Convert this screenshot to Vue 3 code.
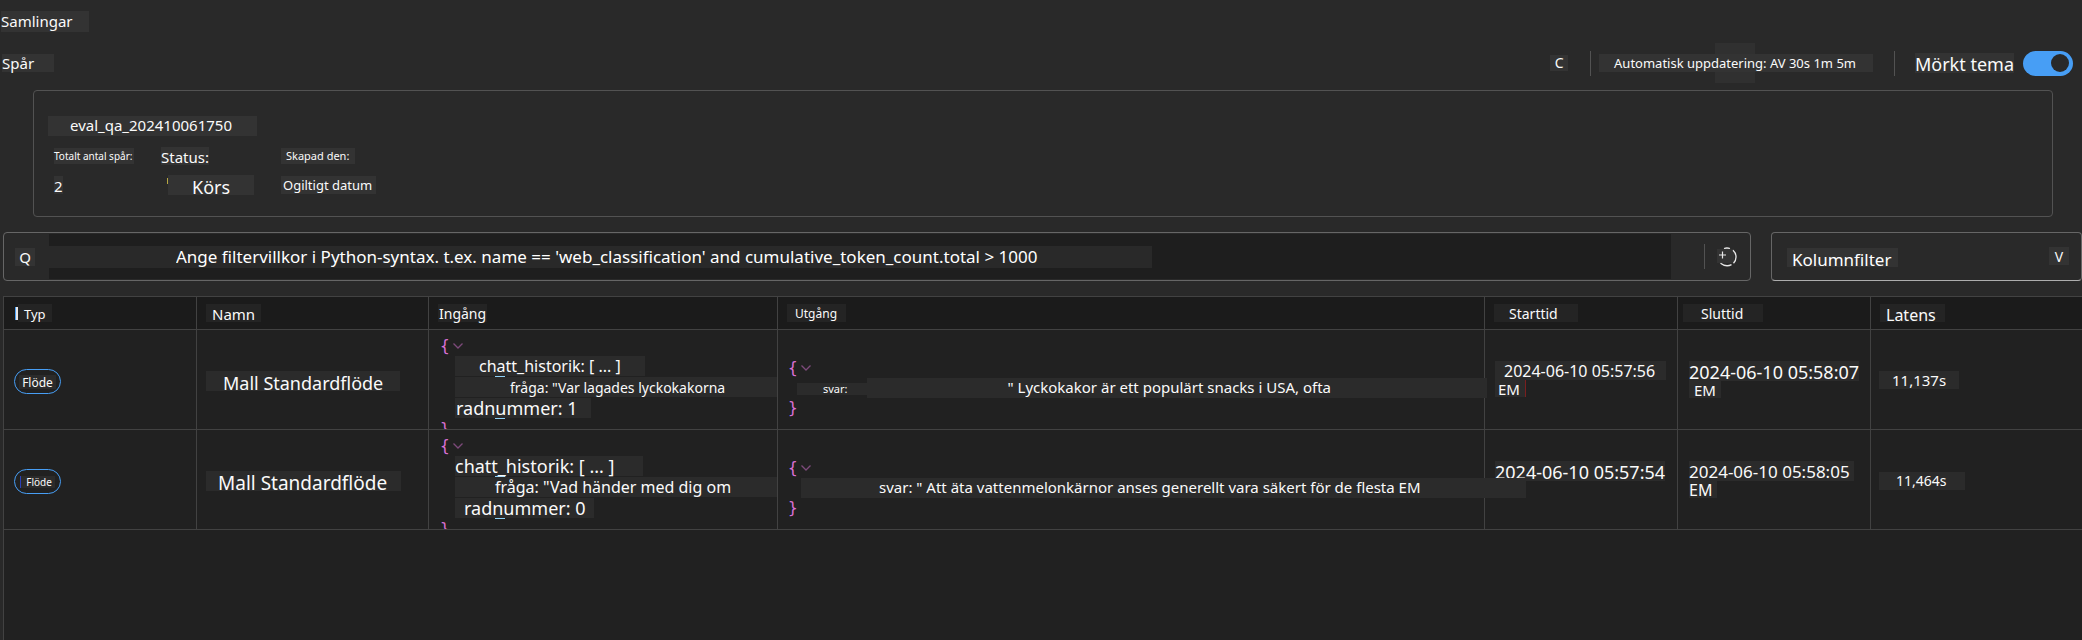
<script setup>
import { ref } from 'vue'

const darkTheme = ref(true)
const filter = ref("Ange filtervillkor i Python-syntax. t.ex. name == 'web_classification' and cumulative_token_count.total > 1000")
const column = ref('all')

const rows = [
  {
    id: 'a', kind: 'Flöde', name: 'Mall Standardflöde',
    history: 'chatt_historik: [ ... ]', question: 'fråga: "Var lagades lyckokakorna', line: 'radnummer: 1',
    answerKey: 'svar:', answer: '" Lyckokakor är ett populärt snacks i USA, ofta',
    start: '2024-06-10 05:57:56', startSuffix: 'EM',
    end: '2024-06-10 05:58:07', endSuffix: 'EM', latency: '11,137s'
  },
  {
    id: 'b', kind: 'Flöde', name: 'Mall Standardflöde',
    history: 'chatt_historik: [ ... ]', question: 'fråga: "Vad händer med dig om', line: 'radnummer: 0',
    answerKey: '', answer: 'svar: " Att äta vattenmelonkärnor anses generellt vara säkert för de flesta EM',
    start: '2024-06-10 05:57:54', startSuffix: '',
    end: '2024-06-10 05:58:05', endSuffix: 'EM', latency: '11,464s'
  }
]
</script>

<template>
  <div class="page">
    <nav class="crumbs"><a href="#" class="chip crumb">Samlingar</a></nav>

    <header class="bar">
      <h1 class="chip title">Spår</h1>
      <div class="tools">
        <button type="button" class="chip refresh" aria-label="Uppdatera">C</button>
        <span class="rule"></span>
        <div class="auto"><span class="chip auto-text">Automatisk uppdatering: AV 30s 1m 5m</span></div>
        <span class="rule"></span>
        <label class="chip theme-label" for="theme">Mörkt tema</label>
        <input id="theme" v-model="darkTheme" class="toggle" type="checkbox" />
      </div>
    </header>

    <section class="card">
      <h2 class="chip run-name">eval_qa_202410061750</h2>
      <dl class="facts">
        <div class="fact total">
          <dt><span class="chip small total-label">Totalt antal spår:</span></dt>
          <dd><span class="chip count">2</span></dd>
        </div>
        <div class="fact status">
          <dt><span class="chip medium">Status:</span></dt>
          <dd class="running"><span class="tick"></span><span class="chip state">Körs</span></dd>
        </div>
        <div class="fact">
          <dt><span class="chip small created">Skapad den:</span></dt>
          <dd><span class="chip date">Ogiltigt datum</span></dd>
        </div>
      </dl>
    </section>

    <div class="filters">
      <div class="search">
        <label class="chip search-icon" for="filter">Q</label>
        <div class="field"><input id="filter" v-model="filter" class="query" type="text" spellcheck="false" /></div>
        <span class="rule"></span>
        <button type="button" class="add" aria-label="Lägg till">
          <svg width="22" height="22" viewBox="0 0 22 22" fill="none">
            <path d="M1 3h17v14H1z" fill="#333" />
            <path d="M8 2.5Q11 1.5 14 2.5M17 4.3A9 9 0 0 1 17.5 17.3M15.5 18.6Q10 21.5 4.5 17.2" stroke="#e8e8e8" stroke-width="1.3" />
            <path d="M3 9h7M6.5 5.5v7" stroke="#e8e8e8" stroke-width="1.2" />
          </svg>
        </button>
      </div>
      <div class="columns">
        <select id="columns" v-model="column" aria-label="Kolumnfilter"><option value="all">Kolumnfilter</option></select>
        <span class="chip caret" aria-hidden="true">V</span>
      </div>
    </div>

    <main class="traces">
      <table>
        <colgroup>
          <col class="c-type" /><col class="c-name" /><col class="c-in" /><col />
          <col class="c-time" /><col class="c-time" /><col class="c-lat" />
        </colgroup>
        <thead>
          <tr>
            <th scope="col"><div class="head"><span class="sort"></span><span class="chip h-type">Typ</span></div></th>
            <th scope="col"><div class="head"><span class="chip h-name">Namn</span></div></th>
            <th scope="col"><div class="head"><span class="chip h-in">Ingång</span></div></th>
            <th scope="col"><div class="head"><span class="chip h-out">Utgång</span></div></th>
            <th scope="col"><div class="head"><span class="chip h-start">Starttid</span></div></th>
            <th scope="col"><div class="head tight"><span class="chip h-end">Sluttid</span></div></th>
            <th scope="col"><div class="head"><span class="chip h-lat">Latens</span></div></th>
          </tr>
        </thead>
        <tbody>
          <tr v-for="r in rows" :key="r.id" :class="'row-' + r.id">
            <td><span class="pill"><span class="chip kind">{{ r.kind }}</span></span></td>
            <td><div class="name-cell"><span class="chip name">{{ r.name }}</span></div></td>
            <td>
              <div class="tree input-tree">
                <div class="brace">{ <svg width="10" height="6" viewBox="0 0 10 6" fill="none"><path d="M.5.5 5 5 9.5.5" stroke="#7d4a7b" stroke-width="1.3" /></svg></div>
                <div class="line marked"><span class="chip history">{{ r.history }}</span></div>
                <div class="line"><span class="chip question">{{ r.question }}</span></div>
                <div class="line marked"><span class="chip number">{{ r.line }}</span></div>
                <div class="brace">}</div>
              </div>
            </td>
            <td>
              <div class="tree output-tree">
                <div class="brace">{ <svg width="10" height="6" viewBox="0 0 10 6" fill="none"><path d="M.5.5 5 5 9.5.5" stroke="#7d4a7b" stroke-width="1.3" /></svg></div>
                <div class="line out-line"><span v-if="r.answerKey" class="chip key">{{ r.answerKey }}</span><span class="chip answer">{{ r.answer }}</span></div>
                <div class="brace">}</div>
              </div>
            </td>
            <td><div class="time start"><span class="chip stamp">{{ r.start }}</span><span v-if="r.startSuffix" class="chip suffix">{{ r.startSuffix }}</span></div></td>
            <td><div class="time end"><span class="chip stamp">{{ r.end }}</span><span class="chip suffix">{{ r.endSuffix }}</span></div></td>
            <td><span class="chip latency">{{ r.latency }}</span></td>
          </tr>
        </tbody>
      </table>
    </main>
  </div>
</template>

<style>
body { margin: 0; background: #292929; }
</style>

<style scoped>
* { box-sizing: border-box; }
.page {
  min-height: 100vh; display: flex; flex-direction: column; overflow: hidden;
  background: #292929; color: #fff; font-family: "Noto Sans", "Open Sans", sans-serif; font-size: 15px;
}
h1, h2, dl, dd { margin: 0; font-weight: 400; }
button, input, select { font: inherit; color: inherit; border: 0; margin: 0; padding: 0; }
.chip {
  display: inline-block; flex: none; height: 18px; line-height: 18px;
  background: #333; white-space: nowrap; color: #fafafa;
}

.crumbs { padding: 11px 0 0 1px; height: 43px; }
.crumb { height: 21px; line-height: 20px; padding-right: 16px; text-decoration: none; }

.bar { display: flex; align-items: center; justify-content: space-between; height: 40px; padding: 0 9px 0 2px; }
.title { font-size: 15px; padding-right: 20px; }
.tools { display: flex; align-items: center; }
.refresh { width: 18px; height: 16px; line-height: 16px; font-size: 14px; margin-right: 22px; text-align: center; }
.rule { width: 1px; height: 25px; background: #525252; }
.auto {
  display: flex; align-items: center; height: 40px; padding: 0 21px 0 8px;
  background: linear-gradient(#303030, #303030) 124px 0 / 40px 40px no-repeat;
}
.auto-text { font-size: 13px; padding: 0 17px 0 15px; }
.theme-label { font-size: 18px; height: 20px; line-height: 23px; margin: 0 9px 0 20px; }
.toggle {
  appearance: none; width: 50px; height: 25px; border-radius: 13px; background: #666;
  display: flex; align-items: center; padding: 0 4px;
}
.toggle::before { content: ""; width: 18px; height: 18px; border-radius: 50%; background: #292929; }
.toggle:checked { background: #479ef5; justify-content: flex-end; }

.card {
  margin: 7px 29px 0 33px; height: 127px; padding: 25px 14px 0;
  border: 1px solid #525252; border-radius: 4px;
}
.run-name { display: table; font-size: 15px; height: 20px; line-height: 19px; padding: 0 25px 0 22px; }
.facts { display: flex; padding-left: 6px; margin-top: 11px; }
.fact { display: flex; flex-direction: column; gap: 11px; }
.fact dt, .fact dd { display: flex; height: 18px; align-items: center; }
.total { width: 107px; }
.status { width: 120px; }
.small { font-size: 11px; height: 16px; line-height: 16px; }
.total-label { font-size: 10px; padding-right: 2px; }
.medium { font-size: 15px; line-height: 20px; }
.created { padding: 0 6px 0 5px; }
.count { font-size: 15px; line-height: 20px; }
.tick { width: 1px; height: 6px; background: #b5a642; margin: 0 0 8px 6px; }
.state { font-size: 18px; height: 20px; line-height: 24px; padding: 0 24px; }
.date { font-size: 13px; padding: 0 4px 0 2px; }

.filters { display: flex; gap: 20px; margin: 15px 0 0 3px; }
.search { flex: 1; display: flex; align-items: center; height: 49px; border: 1px solid #666; border-radius: 4px; padding-right: 12px; }
.search-icon { width: 20px; margin: 0 14px 0 11px; text-align: center; }
.field { flex: 1; height: 45px; display: flex; align-items: center; background: #1e1e1e; margin-right: 33px; }
.query { width: 68%; height: 22px; line-height: 22px; padding-left: 127px; background: #292929; font-size: 17px; outline: 0; }
.add { display: flex; background: none; margin-left: 11px; }
.columns { position: relative; width: 311px; height: 49px; }
.columns select {
  appearance: none; width: 100%; height: 100%; padding: 5px 20px 0; font-size: 17px;
  border: 1px solid #666; border-bottom-color: #adadad; border-radius: 4px;
  background: linear-gradient(#333, #333) 15px 15px / 111px 19px no-repeat, #292929;
}
.caret { position: absolute; right: 13px; top: 15px; width: 20px; line-height: 20px; font-size: 14px; text-align: center; pointer-events: none; }

.traces { flex: 1; margin: 15px 0 0 3px; background: #212121; border-left: 1px solid #424242; }
table { width: 100%; table-layout: fixed; border-collapse: separate; border-spacing: 0; }
.c-type { width: 193px; }
.c-name { width: 232px; }
.c-in { width: 349px; }
.c-time { width: 193px; }
.c-lat { width: 211px; }
th, td { padding: 0; border: 0 solid #424242; border-right-width: 1px; border-bottom-width: 1px; text-align: left; font-weight: 400; }
th { height: 34px; border-top-width: 1px; background: #1b1b1b; }
td { height: 100px; }
th:last-child, td:last-child { border-right: 0; }
th .chip { background: #242424; line-height: 20px; }
td .chip { background: #2b2b2b; }
.head { display: flex; align-items: center; padding-left: 9px; }
.head.tight { padding-left: 5px; }
.sort { width: 3px; height: 13px; background: #e8e8e8; border-left: 1px solid #479ef5; margin-left: 2px; }
.h-type { font-size: 13px; padding: 0 6px; }
.h-name { font-size: 15px; padding: 0 6px; }
.h-in { font-size: 14px; padding: 0 1px; }
.h-out { font-size: 12px; padding: 0 9px 0 8px; }
.h-start { font-size: 14px; padding: 0 20px 0 15px; }
.h-end { font-size: 14px; padding: 0 20px 0 18px; }
th .h-lat { font-size: 16px; line-height: 22px; padding: 0 9px 0 6px; }

.pill {
  display: flex; align-items: center; justify-content: center; width: 47px; height: 25px; margin: 4px 0 0 10px;
  border: 1px solid #479ef5; border-radius: 13px;
}
.kind { font-size: 12px; height: 14px; line-height: 15px; padding: 0 3px; }
.row-b .kind { font-size: 10px; height: 12px; line-height: 13px; padding: 0 3px 0 5px; border-left: 1px solid #2a3fb8; }
.name-cell { display: flex; padding: 2px 0 0 9px; }
.name { font-size: 18px; height: 20px; line-height: 25px; padding: 0 17px; }
.row-b .name { font-size: 19px; padding: 0 14px 0 12px; }

.tree { height: 99px; overflow: hidden; }
.input-tree { padding: 6px 0 0 11px; }
.output-tree { padding: 28px 0 0 10px; overflow: visible; }
.line { height: 21px; display: flex; align-items: flex-start; padding-left: 15px; }
.brace {
  height: 20px; display: flex; align-items: center; gap: 3px;
  color: #da70d6; font-family: "DejaVu Sans Mono", monospace; font-size: 16px; line-height: 20px;
}
.line .chip { height: 20px; line-height: 21px; }
.marked { background: linear-gradient(#8fd0f5, #8fd0f5) 55px 100% / 10px 1px no-repeat; }
.history { font-size: 16px; padding: 0 24px; }
.question { font-size: 14px; padding-left: 55px; flex: 1; }
.number { font-size: 18px; padding: 0 13px 0 1px; }
.row-b .history { font-size: 18px; padding: 0 28px 0 0; }
.row-b .question { font-size: 16px; padding-left: 40px; }
.row-b .number { padding: 0 8px 0 9px; }

.output-tree .line { height: 20px; padding-left: 9px; }
.out-line .key { font-size: 11px; height: 12px; line-height: 12px; padding: 0 19px 0 26px; margin-top: 5px; }
.out-line .answer { font-size: 15px; line-height: 18px; flex: 1; text-align: center; margin-right: -3px; padding-right: 15px; }
.row-b .output-tree .line { padding-left: 13px; }
.row-b .answer { text-align: left; padding-left: 78px; margin-right: -42px; position: relative; z-index: 1; }

.time { display: flex; flex-direction: column; align-items: flex-start; height: 99px; padding-top: 31px; }
.stamp { font-size: 18px; height: 20px; line-height: 22px; }
.start { padding-left: 10px; }
.end { padding-left: 11px; }
.suffix { font-size: 15px; height: 17px; line-height: 19px; padding: 0 5px; }
.row-a .start .stamp { font-size: 16px; height: 19px; line-height: 21px; padding: 0 11px 0 9px; }
.row-a .start .suffix { padding-left: 3px; border-right: 1px solid #7a1f1f; }
.row-b .end .stamp { font-size: 17px; padding-right: 4px; }
.row-b .end .suffix { font-size: 16px; padding: 0 5px 0 0; }
.latency { font-size: 15px; margin-left: 8px; padding: 0 13px; }
.row-b .latency { font-size: 14px; padding: 0 18px 0 17px; }
</style>
